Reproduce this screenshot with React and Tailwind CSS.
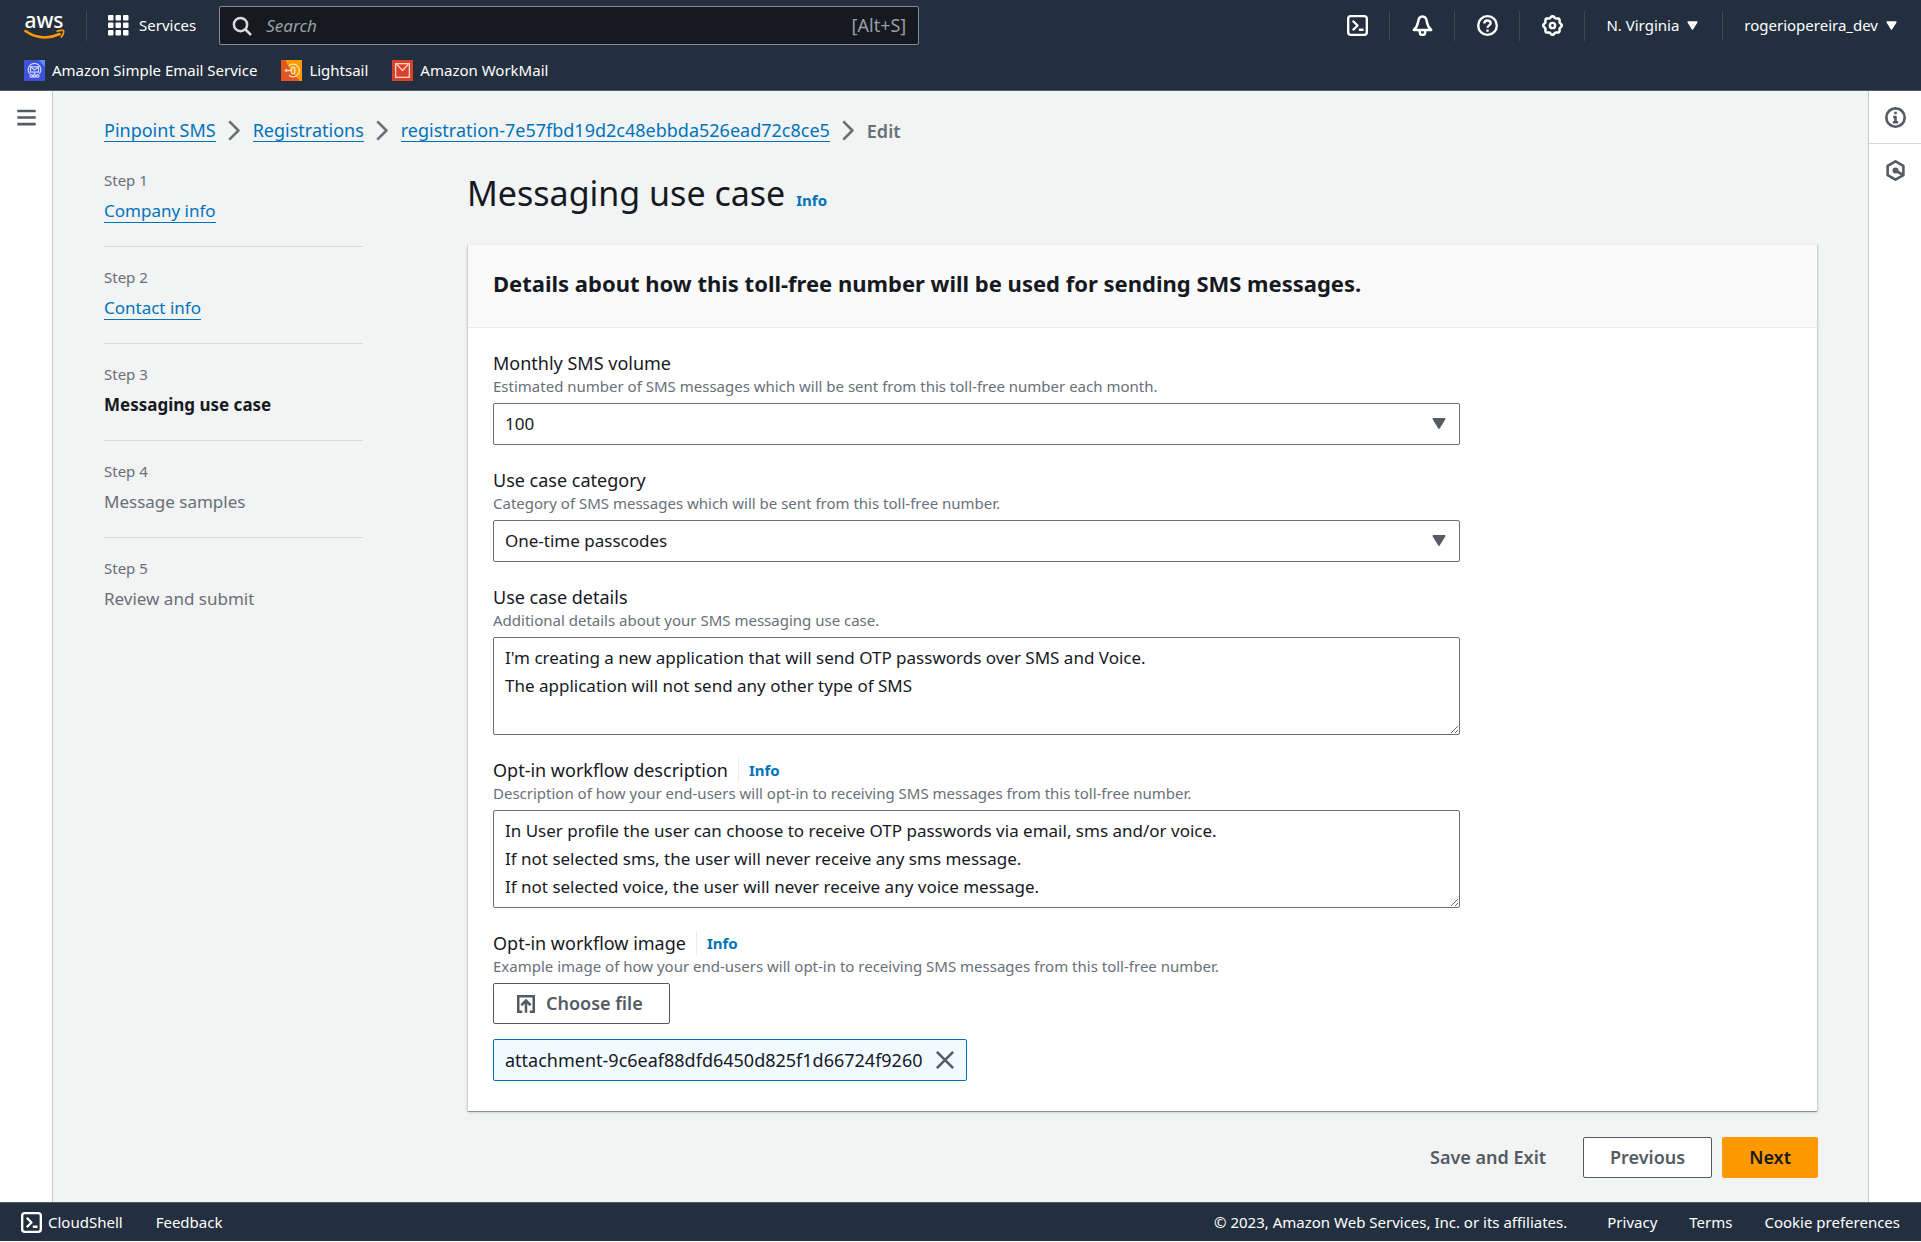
import React from "react";

const font = "font-['Noto_Sans','Open_Sans',sans-serif]";

function AwsLogo() {
  return (
    <a href="#home" aria-label="AWS home" className="flex w-[41px] flex-col items-center text-white">
      <span className="text-[21px] leading-[18px] font-medium">aws</span>
      <svg viewBox="0 0 42 11" className="h-[11px] w-[41px]" fill="none" aria-hidden="true">
        <path d="M1.500 2C12 9.600 25 10.400 36.500 5" stroke="#ff9900" strokeWidth="2.600" strokeLinecap="round" />
        <path d="M34 2.200c2.600-1 6-1.200 6.500-.5.600.8-.2 4-2.300 6.300" stroke="#ff9900" strokeWidth="1.800" strokeLinecap="round" strokeLinejoin="round" />
      </svg>
    </a>
  );
}

function Svg({ size = "size-5", children, sw = 2, color = "" }) {
  return (
    <svg viewBox="0 0 16 16" className={`${size} ${color} shrink-0`} fill="none" stroke="currentColor" strokeWidth={sw} strokeLinejoin="round" aria-hidden="true">
      {children}
    </svg>
  );
}

const GridIcon = () => (
  <svg viewBox="0 0 21 21" className="size-[21px]" fill="currentColor" aria-hidden="true">
    {[0, 7.5, 15].map((y) => [0, 7.5, 15].map((x) => <rect key={`${x}-${y}`} x={x} y={y} width="5.500" height="5.500" rx="1" />))}
  </svg>
);
const ShellIcon = () => (
  <Svg size="size-[21px]" sw={1.8}>
    <rect x="0.900" y="0.900" width="14.200" height="14.200" rx="2" />
    <path d="M4.400 4.400 8 8l-3.600 3.600M9 11.200h3.600" />
  </Svg>
);
const BellIcon = () => (
  <Svg size="size-[21px]" sw={1.9}>
    <path d="M8 1.200C6 1.200 5 2.700 4.700 5 4.300 7.800 3.200 9.600 1.400 11.400h13.200C12.800 9.600 11.700 7.800 11.300 5 11 2.700 10 1.200 8 1.200ZM5.900 11.600v1.500a2.100 2.100 0 0 0 4.200 0v-1.500" />
  </Svg>
);
const HelpIcon = () => (
  <Svg size="size-[21px]" sw={1.8}>
    <circle cx="8" cy="8" r="7.100" />
    <path d="M5.600 6.400C5.600 4.900 6.600 4.200 8 4.200s2.400.8 2.400 2.100C10.400 7.900 8 8 8 9.800M8 11v1.700" />
  </Svg>
);

const gearPath =
  Array.from({ length: 96 }, (_, i) => {
    const a = (i / 96) * Math.PI * 2;
    const r = 6.5 + 0.6 * Math.cos(8 * a);
    return `${i ? "L" : "M"}${(8 + r * Math.cos(a)).toFixed(2)} ${(8 + r * Math.sin(a)).toFixed(2)}`;
  }).join("") + "Z";

const GearIcon = () => (
  <Svg size="size-[21px]" sw={1.9}>
    <path d={gearPath} />
    <circle cx="8" cy="8" r="2" />
  </Svg>
);
const Caret = ({ className }) => (
  <svg viewBox="0 0 14 11" className={className} fill="currentColor" aria-hidden="true">
    <path d="M1.500 0h11a1 1 0 0 1 .8 1.600L7.700 10.500a.8.8 0 0 1-1.400 0L.7 1.600A1 1 0 0 1 1.500 0Z" />
  </svg>
);

const Divider = () => <span className="h-[30px] w-px bg-[#414750]" />;

function TopNav() {
  return (
    <header className="h-[91px] shrink-0 border-b border-[#545b64] bg-[#232f3e] text-[15px] text-white">
      <div className="flex h-[51px] items-center justify-between">
        <div className="flex items-center">
          <div className="flex w-[86px] justify-center pl-[2px]">
            <AwsLogo />
          </div>
          <Divider />
          <button type="button" className="ml-[21px] flex items-center gap-[10px]">
            <GridIcon />
            Services
          </button>
          <label className="ml-[23px] flex h-[39px] w-[700px] items-center rounded-[2px] border border-[#878c94] bg-[#16191f] px-3 text-[17px] text-[#95a0a8]">
            <Svg size="size-5" color="text-[#d5dbdb]">
              <circle cx="6.800" cy="6.800" r="5.300" />
              <path d="m10.600 10.600 4.600 4.600" />
            </Svg>
            <input type="search" aria-label="Search" placeholder="Search" className="ml-[14px] min-w-0 flex-1 bg-transparent italic outline-none placeholder:text-[#95a0a8]" />
            <span className="text-[18px]">[Alt+S]</span>
          </label>
        </div>
        <nav aria-label="Account" className="flex items-center">
          {[["CloudShell", ShellIcon], ["Notifications", BellIcon], ["Help", HelpIcon], ["Settings", GearIcon]].map(([name, Icon]) => (
            <React.Fragment key={name}>
              <button type="button" aria-label={name} className="flex w-16 justify-center">
                <Icon />
              </button>
              <Divider />
            </React.Fragment>
          ))}
          <button type="button" className="flex items-center gap-2 pr-6 pl-[21px]">
            N. Virginia
            <Caret className="h-[9px] w-[11px]" />
          </button>
          <Divider />
          <button type="button" className="flex items-center gap-2 pr-6 pl-[21px]">
            rogeriopereira_dev
            <Caret className="h-[9px] w-[11px]" />
          </button>
        </nav>
      </div>
      <nav aria-label="Favorites" className="flex h-[38px] items-center gap-6 px-6">
        <a href="#ses" className="flex items-center gap-[7px]">
          <svg viewBox="0 0 20 20" className="size-[21px]" aria-hidden="true">
            <rect width="20" height="20" fill="#3f51d9" />
            <path d="M14 0h6v7z" fill="#5b8ef0" />
            <g fill="none" stroke="#c9d2ff" strokeWidth="1.200">
              <path d="M5.500 13.200a6 6 0 1 1 9 0" />
              <rect x="6.200" y="6.500" width="7.600" height="5" />
              <path d="m6.200 6.500 3.800 3 3.800-3M10 11.500V14" />
              <circle cx="7" cy="15.200" r="1.200" />
              <circle cx="10" cy="15.200" r="1.200" />
              <circle cx="13" cy="15.200" r="1.200" />
            </g>
          </svg>
          Amazon Simple Email Service
        </a>
        <a href="#lightsail" className="flex items-center gap-[7px]">
          <svg viewBox="0 0 20 20" className="size-[21px]" aria-hidden="true">
            <rect width="20" height="20" fill="#ff9900" />
            <path d="M0 0h4l3 6 5 7 6 7H0z" fill="#e2561f" />
            <g fill="none" stroke="#ffe3bd" strokeWidth="1.200">
              <path d="M7.500 5.500A6 6 0 1 1 7.500 14.500M3.500 10H10M5 8.500v3" />
              <ellipse cx="11.500" cy="10" rx="1.800" ry="3.200" />
            </g>
          </svg>
          Lightsail
        </a>
        <a href="#workmail" className="flex items-center gap-[7px]">
          <svg viewBox="0 0 20 20" className="size-[21px]" aria-hidden="true">
            <rect width="20" height="20" fill="#d9412b" />
            <g fill="none" stroke="#ffd9d2" strokeWidth="1.200">
              <rect x="3.500" y="3.500" width="13" height="13" />
              <path d="m4.500 4 5.500 6 5.500-6" />
            </g>
          </svg>
          Amazon WorkMail
        </a>
      </nav>
    </header>
  );
}

const link = "border-b border-[#0073bb] text-[#0073bb]";

function Breadcrumbs() {
  const items = ["Pinpoint SMS", "Registrations", "registration-7e57fbd19d2c48ebbda526ead72c8ce5"];
  return (
    <nav aria-label="Breadcrumbs" className="flex items-center text-[18px] leading-[22px]">
      {items.map((t) => (
        <React.Fragment key={t}>
          <a href="#crumb" className={link}>{t}</a>
          <Svg size="mx-2 size-[21px]" color="text-[#687078]">
            <path d="m4 1 7 7-7 7" />
          </Svg>
        </React.Fragment>
      ))}
      <span className="font-semibold text-[#687078]">Edit</span>
    </nav>
  );
}

function Steps() {
  const steps = [
    ["Company info", "link"],
    ["Contact info", "link"],
    ["Messaging use case", "current"],
    ["Message samples", ""],
    ["Review and submit", ""],
  ];
  return (
    <ol className="w-[259px] shrink-0 text-[17px] leading-[22px] text-[#687078]">
      {steps.map(([label, kind], i) => (
        <li key={label} className="flex h-[97px] flex-col items-start gap-[9px] border-b border-[#d5dbdb] pt-[19px] last:border-b-0">
          <span className="text-[15px]">Step {i + 1}</span>
          {kind === "link" ? (
            <a href="#step" className={link}>{label}</a>
          ) : (
            <span className={kind === "current" ? "font-bold text-[#16191f]" : ""}>{label}</span>
          )}
        </li>
      ))}
    </ol>
  );
}

function Info({ divided }) {
  return (
    <a href="#info" className={divided ? "ml-[10px] border-l border-[#eaeded] pl-[10px] text-[15px] font-bold text-[#0073bb]" : "text-[15px] font-bold text-[#0073bb]"}>
      Info
    </a>
  );
}

function Field({ id, label, hint, info, children }) {
  return (
    <div>
      <div className="flex items-center text-[18px] leading-6 text-[#16191f]">
        <label htmlFor={id}>{label}</label>
        {info && <Info divided />}
      </div>
      <p id={`${id}-hint`} className="mb-[6px] text-[15px] leading-[22px] text-[#687078]">{hint}</p>
      {children}
    </div>
  );
}

const box = "w-full rounded-[2px] border border-[#687078] bg-white px-[11px] text-[17px] text-[#16191f]";

function Select({ id, value }) {
  return (
    <div className="relative">
      <select id={id} aria-describedby={`${id}-hint`} className={`${box} h-[42px] appearance-none`}>
        <option>{value}</option>
      </select>
      <Caret className="pointer-events-none absolute top-[15px] right-[14px] h-[11px] w-[14px] text-[#545b64]" />
    </div>
  );
}

function Area({ id, value }) {
  return <textarea id={id} rows={3} aria-describedby={`${id}-hint`} defaultValue={value} className={`${box} block py-[6px] leading-[28px]`} />;
}

function FormCard() {
  return (
    <section className="rounded-[2px] border-x border-t border-x-[#ccd1d2] border-t-[#eaeded] border-b border-b-[#879196] bg-white shadow-sm">
      <h2 className="border-b border-[#eaeded] bg-[#fafafa] px-[25px] pt-[23px] pb-[29px] text-[22px] leading-[30px] font-bold text-[#16191f]">
        Details about how this toll-free number will be used for sending SMS messages.
      </h2>
      <div className="px-[25px] pt-[23px] pb-[30px]">
        <div className="flex w-3/4 flex-col gap-[23px] pr-[7px]">
          <Field id="volume" label="Monthly SMS volume" hint="Estimated number of SMS messages which will be sent from this toll-free number each month.">
            <Select id="volume" value="100" />
          </Field>
          <Field id="category" label="Use case category" hint="Category of SMS messages which will be sent from this toll-free number.">
            <Select id="category" value="One-time passcodes" />
          </Field>
          <Field id="details" label="Use case details" hint="Additional details about your SMS messaging use case.">
            <Area id="details" value={"I'm creating a new application that will send OTP passwords over SMS and Voice.\nThe application will not send any other type of SMS"} />
          </Field>
          <Field id="workflow" info label="Opt-in workflow description" hint="Description of how your end-users will opt-in to receiving SMS messages from this toll-free number.">
            <Area id="workflow" value={"In User profile the user can choose to receive OTP passwords via email, sms and/or voice.\nIf not selected sms, the user will never receive any sms message.\nIf not selected voice, the user will never receive any voice message."} />
          </Field>
          <Field id="image" info label="Opt-in workflow image" hint="Example image of how your end-users will opt-in to receiving SMS messages from this toll-free number.">
            <div className="flex flex-col items-start gap-[15px]">
              <button id="image" type="button" className="flex h-[41px] items-center gap-[10px] rounded-[2px] border border-[#545b64] bg-white pr-[26px] pl-[22px] text-[18px] font-semibold text-[#545b64]">
                <Svg size="size-5">
                  <path d="M5 14.200H1.800V1.800h12.400v12.400H11M8 15V6M4.300 9 8 5.300 11.700 9" strokeLinejoin="miter" />
                </Svg>
                Choose file
              </button>
              <div className="flex h-[42px] items-center gap-3 rounded-[2px] border border-[#0073bb] bg-[#f1faff] px-[11px] text-[18px] text-[#16191f]">
                attachment-9c6eaf88dfd6450d825f1d66724f9260
                <button type="button" aria-label="Remove file">
                  <Svg size="size-5" color="text-[#545b64]">
                    <path d="m1.500 1.500 13 13m0-13-13 13" />
                  </Svg>
                </button>
              </div>
            </div>
          </Field>
        </div>
      </div>
    </section>
  );
}

function Actions() {
  const b = "h-[41px] rounded-[2px] border text-[18px] font-semibold";
  return (
    <div className="mt-[25px] flex justify-end">
      <button type="button" className={`${b} mr-[10px] border-transparent px-[26px] text-[#545b64]`}>Save and Exit</button>
      <button type="button" className={`${b} mr-[10px] border-[#545b64] bg-white px-[26px] text-[#545b64]`}>Previous</button>
      <button type="button" className={`${b} border-[#ff9900] bg-[#ff9900] px-[26px] text-[#16191f]`}>Next</button>
    </div>
  );
}

function Footer() {
  return (
    <footer className="flex h-[39px] shrink-0 items-center justify-between border-t border-[#545b64] bg-[#232f3e] px-[21px] text-[15px] text-white">
      <div className="flex items-center gap-[33px]">
        <button type="button" className="flex items-center gap-[6px]">
          <ShellIcon />
          CloudShell
        </button>
        <a href="#feedback">Feedback</a>
      </div>
      <div className="flex items-center gap-8">
        <span className="mr-2">© 2023, Amazon Web Services, Inc. or its affiliates.</span>
        <a href="#privacy">Privacy</a>
        <a href="#terms">Terms</a>
        <a href="#cookies">Cookie preferences</a>
      </div>
    </footer>
  );
}

export default function App() {
  return (
    <div className={`${font} flex min-h-screen flex-col bg-white pb-px`}>
      <TopNav />
      <div className="flex flex-1">
        <aside className="flex w-[53px] shrink-0 justify-center border-r border-[#c3c9cb] pt-4">
          <button type="button" aria-label="Open navigation" className="h-5 text-[#545b64]">
            <Svg size="size-[21px]">
              <path d="M1 3h14M1 8h14M1 13h14" />
            </Svg>
          </button>
        </aside>
        <main className="min-w-0 flex-1 bg-[#f2f3f3] pt-7 pr-[50px] pb-[23px] pl-[51px]">
          <Breadcrumbs />
          <div className="mt-2 flex gap-[104px]">
            <Steps />
            <div className="min-w-0 flex-1 pt-[19px]">
              <div className="mb-[27px] flex items-baseline gap-[11px]">
                <h1 className="text-[34px] leading-[48px] text-[#16191f]">Messaging use case</h1>
                <Info />
              </div>
              <FormCard />
              <Actions />
            </div>
          </div>
        </main>
        <aside className="w-[53px] shrink-0 border-l border-[#c3c9cb] text-[#545b64]">
          <button type="button" aria-label="Info panel" className="flex h-[53px] w-full items-center justify-center border-b border-[#d5dbdb]">
            <Svg size="size-[21px]" sw={2}>
              <circle cx="8" cy="8" r="7" />
              <path d="M8 3.700v1.900M6.200 7.600H8v3.900M6 11.600h4" />
            </Svg>
          </button>
          <button type="button" aria-label="Resources" className="flex h-[53px] w-full items-center justify-center">
            <Svg size="size-[21px]" sw={2}>
              <path d="m8 1 6 3.500v7L8 15l-6-3.500v-7zM8 8l5 3" />
              <circle cx="8" cy="8" r="1.300" fill="currentColor" />
            </Svg>
          </button>
        </aside>
      </div>
      <Footer />
    </div>
  );
}
